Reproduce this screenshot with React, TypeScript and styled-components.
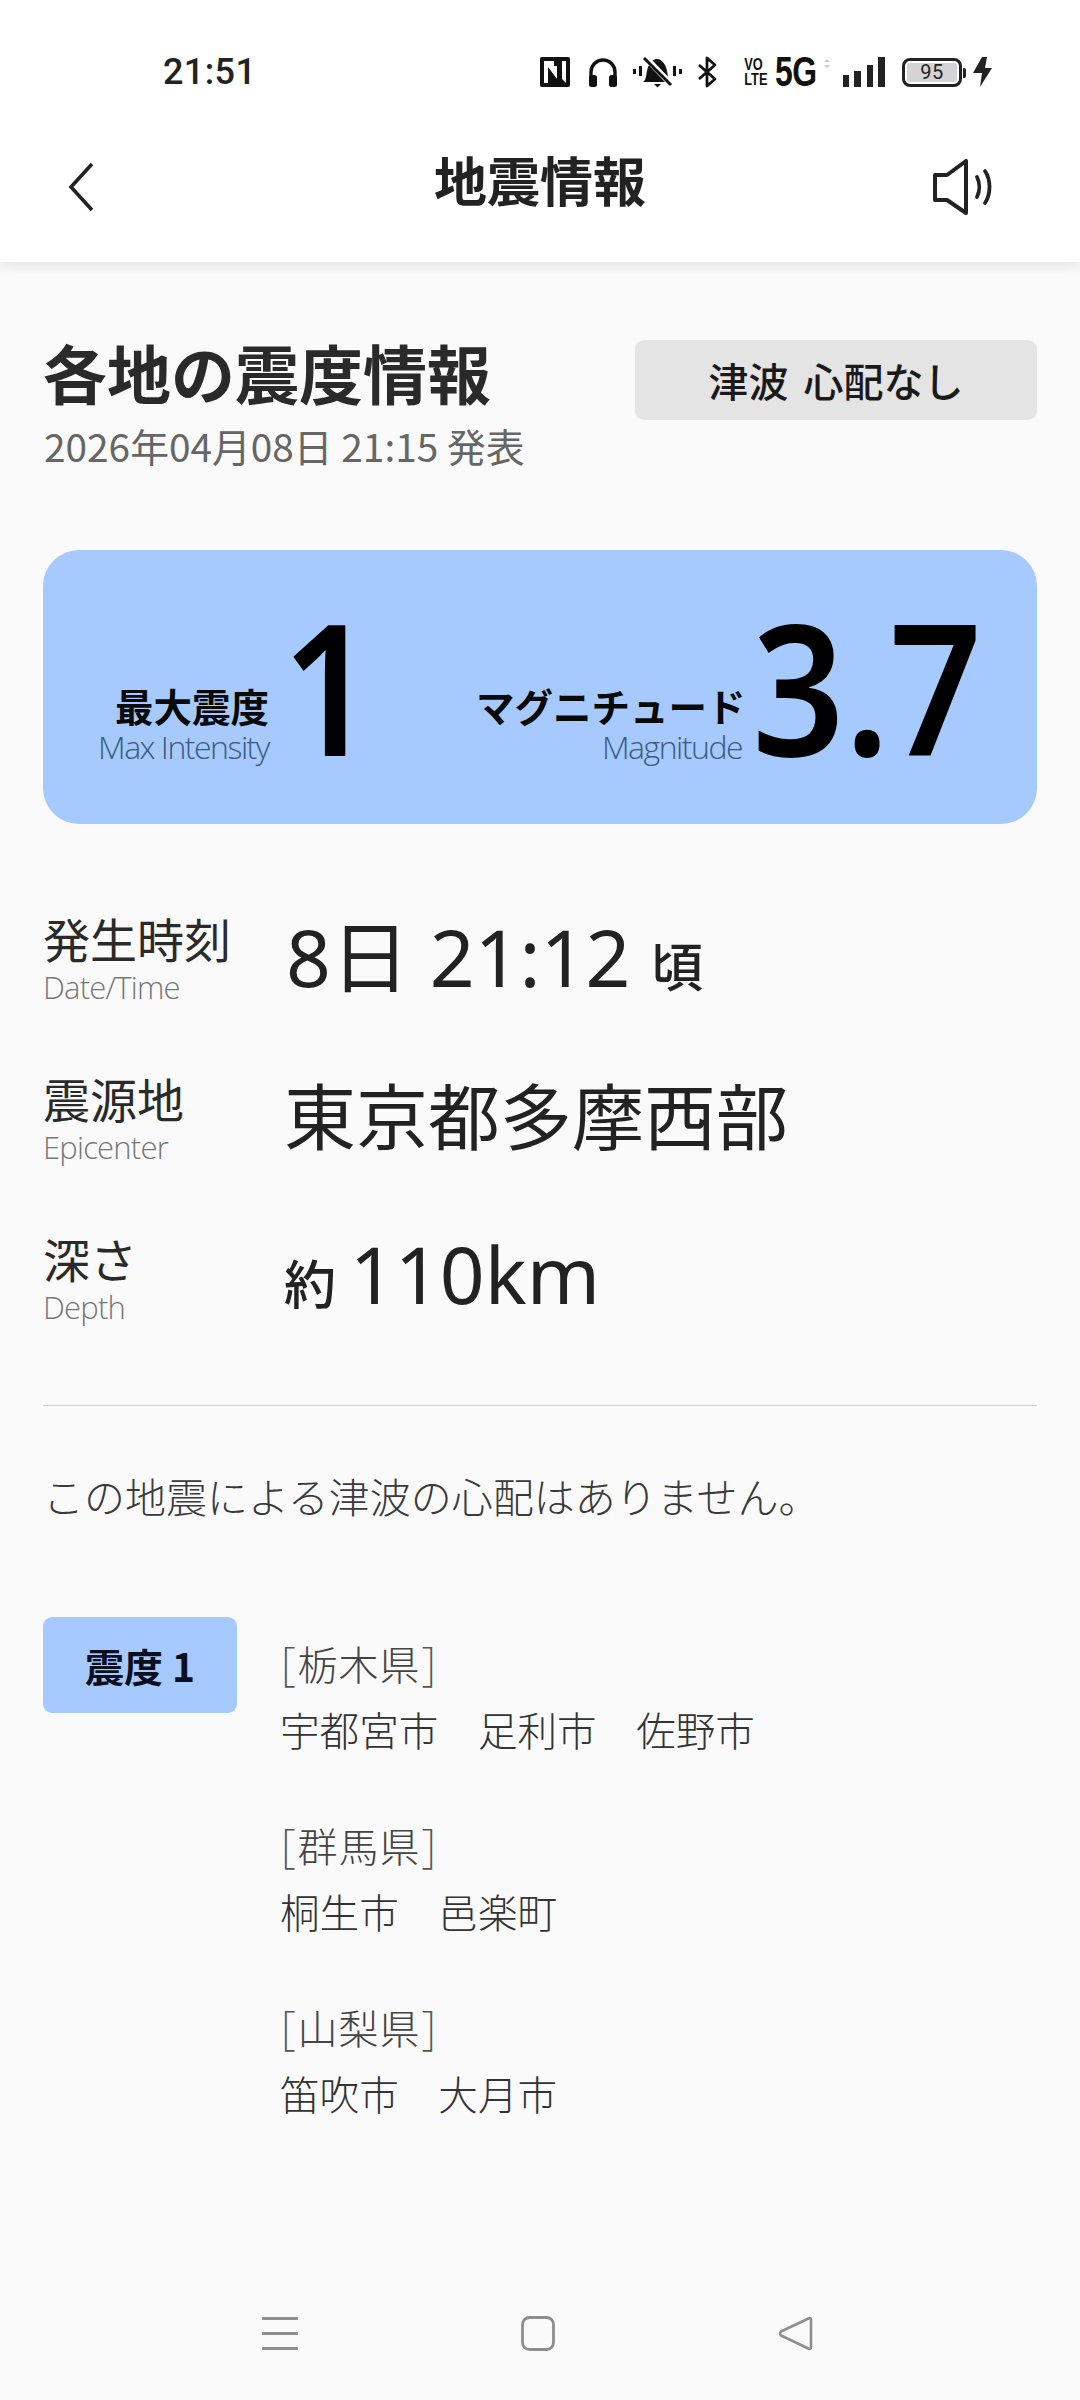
import React from "react";
import styled, { createGlobalStyle } from "styled-components";

const CJK = `"Noto Sans CJK JP", "Noto Sans", sans-serif`;
const LATIN = `"Noto Sans", "Noto Sans CJK JP", sans-serif`;

const Global = createGlobalStyle`
  html, body { margin: 0; padding: 0; background: #fafafa; }
  body { font-family: ${CJK}; color: #222; }
  * { box-sizing: border-box; }
`;

const Page = styled.div`
  width: 1080px;
  height: 2400px;
  display: flex;
  flex-direction: column;
  overflow: hidden;
  background: #fafafa;
`;

const TopBar = styled.header`
  height: 262px;
  flex: none;
  background: #fff;
  box-shadow: 0 3px 14px rgba(0, 0, 0, 0.1);
  display: flex;
  flex-direction: column;
`;

const StatusBar = styled.div`
  height: 127px;
  padding: 54px 0 0 163px;
  display: flex;
  align-items: flex-start;
`;

const Clock = styled.span`
  font: 500 36px/36px Roboto, sans-serif;
  color: #222;
  letter-spacing: 0.4px;
  width: 377px;
  flex: none;
`;

const StatusIcons = styled.div`
  display: flex;
  align-items: center;
  height: 36px;
`;

const Volte = styled.span`
  font: 700 16px/15px "Liberation Sans", sans-serif;
  width: 22px;
  text-align: center;
  color: #111;
  margin-left: 25px;
  transform: scaleX(0.8);
  flex: none;
`;

const FiveG = styled.span`
  font: 700 42px/36px "Liberation Sans", sans-serif;
  margin-left: 11px;
  width: 44px;
  color: #111;
  transform: scaleX(0.76);
  transform-origin: left center;
  letter-spacing: -0.5px;
  flex: none;
`;

const Battery = styled.div`
  width: 60px;
  height: 29px;
  border: 3px solid #222;
  border-radius: 8px;
  margin-left: 17px;
  padding: 2px;
  position: relative;
  display: flex;

  &::after {
    content: "";
    position: absolute;
    right: -7px;
    top: 7px;
    width: 3px;
    height: 10px;
    background: #222;
    border-radius: 0 2px 2px 0;
  }
`;

const BatteryFill = styled.div`
  flex: 1;
  background: #d4d4d4;
  border-radius: 3px;
  text-align: center;
  font: 400 20px/19px Roboto, sans-serif;
  color: #222;
  letter-spacing: 0.5px;
`;

const NavRow = styled.div`
  height: 120px;
  padding: 0 87px 0 66px;
  display: flex;
  align-items: center;
  justify-content: space-between;
  position: relative;
`;

const NavTitle = styled.h1`
  position: absolute;
  left: 0;
  right: 0;
  top: 16px;
  margin: 0;
  text-align: center;
  font: 700 53px/72px ${CJK};
  color: #222;
`;

const Body = styled.main`
  padding: 0 43px;
  display: flex;
  flex-direction: column;
  flex: 1;
`;

const HeadRow = styled.section`
  display: flex;
  justify-content: space-between;
  align-items: flex-start;
  margin-top: 74px;
`;

const HeadTitle = styled.h2`
  margin: 0;
  font: 700 64px/70px ${CJK};
  color: #2a2a2a;
`;

const HeadDate = styled.div`
  font: 400 38.8px/46px ${CJK};
  color: #666;
  margin-top: 16px;
  margin-left: 1px;
`;

const Badge = styled.div`
  width: 402px;
  height: 80px;
  margin-top: 4px;
  background: #e4e4e4;
  border-radius: 9px;
  display: flex;
  align-items: center;
  justify-content: center;
  font: 500 40px/48px ${CJK};
  color: #1a1a1a;
  white-space: pre;
  word-spacing: 6px;
`;

const Summary = styled.section`
  height: 274px;
  margin-top: 82px;
  background: #a6cafd;
  border-radius: 36px;
  display: flex;
  align-items: flex-end;
  padding: 0 30px 59px 55px;
`;

const SummaryLabel = styled.div<{ $w: number }>`
  text-align: right;
  width: ${(p) => p.$w}px;
  flex: none;
`;

const SummaryJa = styled.div`
  font: 700 38.5px/47px ${CJK};
  color: #0a0a0a;
  white-space: nowrap;
`;

const SummaryEn = styled.div`
  font: 300 32px/36px "Open Sans", sans-serif;
  color: #3c5a80;
  letter-spacing: -1.5px;
  white-space: nowrap;
`;

const BigNum = styled.div`
  font: 600 182px/134px ${LATIN};
  color: #000;
  transform: scaleX(0.89);
  transform-origin: left bottom;
  margin-bottom: 13px;
  flex: none;
`;

const One = styled(BigNum)`
  width: 194px;
  margin-left: 13px;
`;

const Three = styled(BigNum)`
  margin-left: 10px;
`;

const FactList = styled.dl`
  margin: 84px 0 17px;
  display: flex;
  flex-direction: column;
`;

const Fact = styled.div`
  display: flex;
  height: 160px;
  align-items: flex-start;
`;

const FactLabel = styled.dt`
  width: 243px;
  flex: none;
`;

const FactJa = styled.div`
  font: 400 47px/60px ${CJK};
  color: #2a2a2a;
`;

const FactEn = styled.div`
  font: 300 31px/38px "Open Sans", sans-serif;
  color: #777;
  letter-spacing: -0.8px;
`;

const FactValue = styled.dd<{ $top: number }>`
  margin: ${(p) => p.$top}px 0 0;
  display: flex;
  align-items: baseline;
  font: 400 78.5px/104px ${LATIN};
  color: #222;
  white-space: pre;
`;

const Small = styled.span`
  font: 500 52px/60px ${CJK};
`;

const Approx = styled(Small)`
  margin: 0 14px 0 -2px;
`;

const CjkValue = styled.span`
  font: 400 72px/104px ${CJK};
  margin-left: -2px;
`;

const Divider = styled.hr`
  border: 0;
  height: 1px;
  background: #cfcfcf;
  margin: 0;
`;

const Notice = styled.p`
  margin: 59px 0 0;
  font: 300 41px/60px ${CJK};
  color: #3a3a3a;
`;

const Intensity = styled.section`
  display: flex;
  margin-top: 92px;
  align-items: flex-start;
`;

const Tag = styled.div`
  width: 194px;
  height: 96px;
  background: #a6cafd;
  border-radius: 9px;
  display: flex;
  align-items: center;
  justify-content: center;
  font: 700 39px/48px ${CJK};
  color: #0a0f20;
  white-space: pre;
  flex: none;
`;

const Areas = styled.div`
  margin-left: 43px;
  padding-top: 14px;
  display: flex;
  flex-direction: column;
  gap: 52px;
`;

const Pref = styled.div`
  font: 300 40px/65px ${CJK};
  color: #444;
  letter-spacing: 1px;
`;

const Bracket = styled.span`
  font: 200 46px/40px "Noto Sans", sans-serif;
  color: #555;
  padding: 0 1px;
`;

const Cities = styled.div`
  font: 300 39.6px/65px ${CJK};
  color: #333;
  white-space: pre;
`;

const SystemNav = styled.nav`
  margin: auto 0 49px;
  padding-left: 219px;
  flex: none;
  display: flex;
  gap: 223px;
`;

const Icon = styled.svg`
  display: block;
  flex: none;
`;

const StatusIcon = styled(Icon)<{ $ml?: number }>`
  margin-left: ${(p) => p.$ml ?? 0}px;
`;

export default function App() {
  return (
    <Page>
      <Global />
      <TopBar>
        <StatusBar>
          <Clock>21:51</Clock>
          <StatusIcons>
            <StatusIcon width="30" height="30" viewBox="0 0 30 30">
              <path fillRule="evenodd" fill="#111" d="M2 0h26a2 2 0 0 1 2 2v26a2 2 0 0 1-2 2H2a2 2 0 0 1-2-2V2a2 2 0 0 1 2-2zM4 4v22h4V10l9 12V9h-3V4H9zM14 4l8 0v18l4 4V4zM8 26" />
            </StatusIcon>
            <StatusIcon $ml={18} width="30" height="30" viewBox="0 0 30 30" fill="none">
              <path d="M3 22V15a12 12 0 0 1 24 0v7" stroke="#111" strokeWidth="3.4" />
              <rect x="1" y="18" width="8" height="12" rx="2.5" fill="#111" />
              <rect x="21" y="18" width="8" height="12" rx="2.5" fill="#111" />
            </StatusIcon>
            <StatusIcon $ml={15} width="49" height="34" viewBox="0 0 49 34" fill="none">
              <path d="M10 27c3-2 3-6 4-11 1-6 5-12 10-12s9 6 10 12c1 5 1 9 4 11z" fill="#111" />
              <path d="M21 29h7l-3.500 3.500z" fill="#111" />
              <path d="M13 3l24 25" stroke="#fff" strokeWidth="6" />
              <path d="M11 3l27 27" stroke="#111" strokeWidth="3" />
              <path d="M1.500 14v5M7.500 11v10M41.500 11v10M47.500 14v5" stroke="#111" strokeWidth="3" />
            </StatusIcon>
            <StatusIcon $ml={15} width="20" height="32" viewBox="0 0 20 32" fill="none">
              <path d="M2 9l16 14-8 7V2l8 7L2 23" stroke="#111" strokeWidth="2.800" strokeLinejoin="round" />
            </StatusIcon>
            <Volte>VO<br />LTE</Volte>
            <FiveG>5G</FiveG>
            <StatusIcon width="24" height="30" viewBox="0 0 24 30">
              <path d="M5 5l3-3 3 3zM5 8l3 3 3-3z" fill="#ccc" />
            </StatusIcon>
            <StatusIcon width="42" height="30" viewBox="0 0 42 30">
              <path d="M0 18h6v12H0zM11 14h7v16h-7zM24 8h6v22h-6zM35 0h7v30h-7z" fill="#222" />
            </StatusIcon>
            <Battery><BatteryFill>95</BatteryFill></Battery>
            <StatusIcon $ml={11} width="19" height="30" viewBox="0 0 19 30">
              <path d="M9 0h5l-2 11h7L7 30l2-14H0z" fill="#222" />
            </StatusIcon>
          </StatusIcons>
        </StatusBar>
        <NavRow>
          <NavTitle>地震情報</NavTitle>
          <Icon width="28" height="50" viewBox="0 0 28 50" fill="none">
            <path d="M26 2L5 25l21 23" stroke="#222" strokeWidth="3.600" />
          </Icon>
          <Icon width="60" height="56" viewBox="0 0 60 56" fill="none">
            <path d="M2 16h12L33 2v52L14 41H2z" stroke="#222" strokeWidth="4" strokeLinejoin="round" />
            <path d="M44 18c3 6 3 14 0 20M52 12c6 9 6 23 0 32" stroke="#222" strokeWidth="3.800" strokeLinecap="round" />
          </Icon>
        </NavRow>
      </TopBar>
      <Body>
        <HeadRow>
          <div>
            <HeadTitle>各地の震度情報</HeadTitle>
            <HeadDate>2026年04月08日 21:15 発表</HeadDate>
          </div>
          <Badge>津波 心配なし</Badge>
        </HeadRow>

        <Summary>
          <SummaryLabel $w={171}>
            <SummaryJa>最大震度</SummaryJa>
            <SummaryEn>Max Intensity</SummaryEn>
          </SummaryLabel>
          <One>1</One>
          <SummaryLabel $w={266}>
            <SummaryJa>マグニチュード</SummaryJa>
            <SummaryEn>Magnitude</SummaryEn>
          </SummaryLabel>
          <Three>3.7</Three>
        </Summary>

        <FactList>
          <Fact>
            <FactLabel>
              <FactJa>発生時刻</FactJa>
              <FactEn>Date/Time</FactEn>
            </FactLabel>
            <FactValue $top={-3}>8日 21:12 <Small>頃</Small></FactValue>
          </Fact>
          <Fact>
            <FactLabel>
              <FactJa>震源地</FactJa>
              <FactEn>Epicenter</FactEn>
            </FactLabel>
            <FactValue $top={-7}><CjkValue>東京都多摩西部</CjkValue></FactValue>
          </Fact>
          <Fact>
            <FactLabel>
              <FactJa>深さ</FactJa>
              <FactEn>Depth</FactEn>
            </FactLabel>
            <FactValue $top={-6}><Approx>約</Approx>110km</FactValue>
          </Fact>
        </FactList>

        <Divider />
        <Notice>この地震による津波の心配はありません。</Notice>

        <Intensity>
          <Tag>震度 1</Tag>
          <Areas>
            <div>
              <Pref><Bracket>[</Bracket>栃木県<Bracket>]</Bracket></Pref>
              <Cities>宇都宮市　足利市　佐野市</Cities>
            </div>
            <div>
              <Pref><Bracket>[</Bracket>群馬県<Bracket>]</Bracket></Pref>
              <Cities>桐生市　邑楽町</Cities>
            </div>
            <div>
              <Pref><Bracket>[</Bracket>山梨県<Bracket>]</Bracket></Pref>
              <Cities>笛吹市　大月市</Cities>
            </div>
          </Areas>
        </Intensity>

        <SystemNav>
          <Icon width="36" height="35" viewBox="0 0 36 35" fill="none">
            <path d="M1.500 2.500h33M1.500 17.500h33M1.500 32.500h33" stroke="#8e8e8e" strokeWidth="3.200" strokeLinecap="round" />
          </Icon>
          <Icon width="34" height="35" viewBox="0 0 34 35" fill="none">
            <rect x="1.500" y="1.500" width="31" height="32" rx="7" stroke="#8e8e8e" strokeWidth="2.800" />
          </Icon>
          <Icon width="35" height="35" viewBox="0 0 35 35" fill="none">
            <path d="M33 3.500v28a1.500 1.500 0 0 1-2.600 1L3 19.500a3 3 0 0 1 0-4L30.400 2.500a1.500 1.500 0 0 1 2.600 1z" stroke="#8e8e8e" strokeWidth="2.600" strokeLinejoin="round" />
          </Icon>
        </SystemNav>
      </Body>
    </Page>
  );
}
